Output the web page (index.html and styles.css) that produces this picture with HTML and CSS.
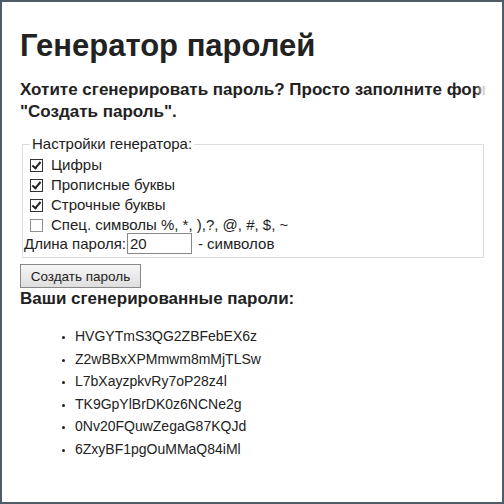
FILE: index.html
```html
<!DOCTYPE html>
<html lang="ru">
<head>
<meta charset="utf-8">
<title>Генератор паролей</title>
<link rel="stylesheet" href="styles.css">
</head>
<body>
<div class="frame">
  <div class="content">
    <h1 class="title">Генератор паролей</h1>
    <p class="intro">Хотите сгенерировать пароль? Просто заполните форму и нажмите на кнопку "Создать пароль".</p>
    <form class="gen-form">
      <fieldset class="settings">
        <legend class="settings-legend">Настройки генератора:</legend>
        <label class="opt"><input class="cb" type="checkbox" checked> Цифры</label>
        <label class="opt"><input class="cb" type="checkbox" checked> Прописные буквы</label>
        <label class="opt"><input class="cb" type="checkbox" checked> Строчные буквы</label>
        <label class="opt"><input class="cb" type="checkbox"> Спец. символы %, *, ),?, @, #, $, ~</label>
        <div class="len-row">Длина пароля:<input class="len-input" type="text" value="20"><span class="len-unit">- символов</span></div>
      </fieldset>
      <button class="btn" type="button">Создать пароль</button>
    </form>
    <h2 class="subtitle">Ваши сгенерированные пароли:</h2>
    <ul class="pw-list">
      <li>HVGYTmS3QG2ZBFebEX6z</li>
      <li>Z2wBBxXPMmwm8mMjTLSw</li>
      <li>L7bXayzpkvRy7oP28z4l</li>
      <li>TK9GpYlBrDK0z6NCNe2g</li>
      <li>0Nv20FQuwZegaG87KQJd</li>
      <li>6ZxyBF1pgOuMMaQ84iMl</li>
    </ul>
  </div>
</div>
</body>
</html>
```
FILE: styles.css
```css
html, body {
  margin: 0;
  padding: 0;
  background: #fff;
}
.frame {
  width: 504px;
  height: 504px;
  box-sizing: border-box;
  border: 2px solid #505d68;
  background: #fff;
  overflow: hidden;
  font-family: "Liberation Sans", Arial, sans-serif;
  color: #222;
}
.content {
  position: relative;
  width: 466px;
  margin-left: 18px;
  overflow: hidden;
  height: 100%;
}
.content::after {
  content: "";
  position: absolute;
  top: 0;
  right: 0;
  width: 10px;
  height: 130px;
  background: linear-gradient(to right, rgba(255,255,255,0), #fff);
}
.title {
  font-size: 31px;
  font-weight: bold;
  margin: 26px 0 0;
  line-height: 36px;
}
.intro {
  width: 720px;
  font-size: 17px;
  font-weight: bold;
  line-height: 22px;
  margin: 15px 0 0;
}
.gen-form {
  margin: 12px 0 0;
}
.settings {
  margin: 0 2px;
  padding: 2px 7px 3px 7px;
  border: 1px solid #ddd;
  display: flex;
  flex-direction: column;
  font-size: 15px;
}
.settings-legend {
  padding: 0 2px 0 2px;
  font-size: 15px;
  line-height: 18px;
}
.opt {
  display: flex;
  align-items: center;
  height: 20px;
  line-height: 20px;
}
.cb {
  appearance: none;
  -webkit-appearance: none;
  position: relative;
  box-sizing: border-box;
  margin: 0 8px 0 0;
  width: 13px;
  height: 13px;
  border: 1px solid #8f8f8f;
  background: #fff;
  flex: none;
}
.cb:checked {
  border-color: #333;
}
.cb:checked::after {
  content: "";
  position: absolute;
  left: 3px;
  top: 0px;
  width: 3px;
  height: 7px;
  border: solid #222;
  border-width: 0 2px 2px 0;
  transform: rotate(40deg);
}
.len-row {
  display: flex;
  align-items: center;
  height: 22px;
  margin-left: -6px;
  margin-top: -3px;
}
.len-input {
  box-sizing: border-box;
  width: 65px;
  height: 21px;
  margin: 0 6px 0 1px;
  padding: 1px 2px;
  border: 1px solid #888;
  font-family: "Liberation Sans", Arial, sans-serif;
  font-size: 15px;
  color: #222;
}
.btn {
  margin: 6px 0 0;
  width: 121px;
  height: 24px;
  border: 1px solid #888;
  background: linear-gradient(#f6f6f6, #dedede);
  font-family: "Liberation Sans", Arial, sans-serif;
  font-size: 13.5px;
  color: #222;
  padding: 0;
}
.subtitle {
  font-size: 17px;
  font-weight: bold;
  margin: 0;
  line-height: 22px;
}
.pw-list {
  margin: 15px 0 0;
  padding-left: 55px;
  font-size: 14px;
  line-height: 22.6px;
  list-style: disc;
}
.pw-list li::marker {
  font-size: 10px;
}
```
